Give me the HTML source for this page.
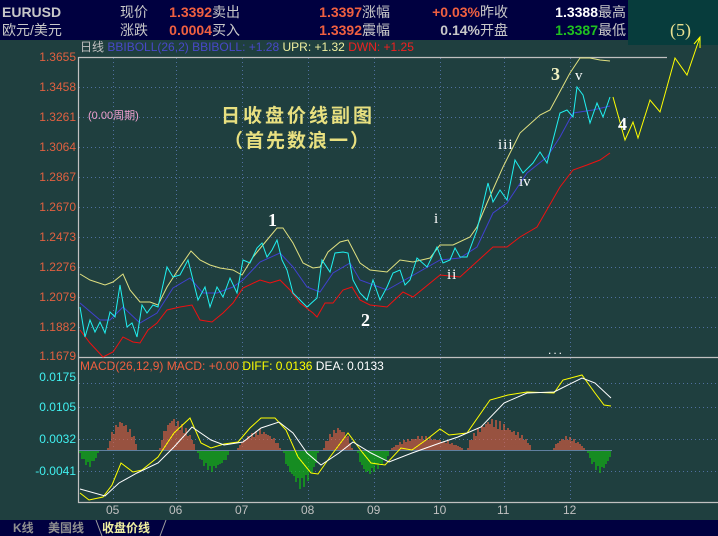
<!DOCTYPE html>
<html><head><meta charset="utf-8"><style>
body{margin:0;width:718px;height:536px;overflow:hidden;background:#1f3f3f;font-family:"Liberation Sans","Noto Sans CJK SC",sans-serif;position:relative}
.a{position:absolute;white-space:nowrap}
#hdr{position:absolute;left:0;top:0;width:718px;height:40px;background:#000040}
.h{position:absolute;font-size:14px;color:#c8c8c8;line-height:18px}
.v{font-weight:bold;color:#f06040}
#tabs{position:absolute;left:0;top:520px;width:718px;height:16px;background:#000040}
.yl{position:absolute;right:642px;font-size:12px;color:#e06040;transform:translateY(-50%)}
.ml{position:absolute;right:642px;font-size:12px;color:#40f0f0;transform:translateY(-50%)}
</style></head><body>
<div id="hdr"></div>
<div style="position:absolute;left:628px;top:0;width:90px;height:45px;background:#073c3c"></div>
<div class="h" style="left:2px;top:3px;font-weight:bold">EURUSD</div>
<div class="h" style="left:2px;top:21px">欧元/美元</div>
<div class="h" style="left:120px;top:3px">现价</div>
<div class="h" style="left:120px;top:21px">涨跌</div>
<div class="h" style="right:478px;top:3px"><span class="v">1.3392</span>卖出</div>
<div class="h" style="right:478px;top:21px"><span class="v">0.0004</span>买入</div>
<div class="h" style="right:328px;top:3px"><span class="v">1.3397</span>涨幅</div>
<div class="h" style="right:328px;top:21px"><span class="v">1.3392</span>震幅</div>
<div class="h" style="right:210px;top:3px"><span class="v">+0.03%</span>昨收</div>
<div class="h" style="right:210px;top:21px"><span class="v" style="color:#c8c8c8">0.14%</span>开盘</div>
<div class="h" style="right:92px;top:3px"><span class="v" style="color:#fff">1.3388</span>最高</div>
<div class="h" style="right:92px;top:21px"><span class="v" style="color:#20c020">1.3387</span>最低</div>

<div class="a" style="left:80px;top:40px;font-size:12px;line-height:14px"><span style="color:#c0c0c0">日线</span> <span style="color:#4848c8">BBIBOLL(26,2) BBIBOLL: +1.28</span> <span style="color:#f0f0a0">UPR: +1.32</span> <span style="color:#f02020">DWN: +1.25</span></div>

<div class="yl" style="top:57px">1.3655</div><div class="yl" style="top:87px">1.3458</div><div class="yl" style="top:117px">1.3261</div><div class="yl" style="top:147px">1.3064</div><div class="yl" style="top:177px">1.2867</div><div class="yl" style="top:207px">1.2670</div><div class="yl" style="top:237px">1.2473</div><div class="yl" style="top:267px">1.2276</div><div class="yl" style="top:297px">1.2079</div><div class="yl" style="top:327px">1.1882</div><div class="yl" style="top:356px">1.1679</div>
<div class="ml" style="top:377px">0.0175</div><div class="ml" style="top:407px">0.0105</div><div class="ml" style="top:439px">0.0032</div><div class="ml" style="top:471px">-0.0041</div>

<svg width="718" height="536" style="position:absolute;left:0;top:0">
<g stroke="#5070a0" stroke-dasharray="1 3" stroke-width="1">
<path d="M79 87.5H718M79 117.5H718M79 147.5H718M79 177.5H718M79 207.5H718M79 237.5H718M79 267.5H718M79 297.5H718M79 327.5H718M79 383.5H718M79 407.5H718M79 439.5H718M79 471.5H718"/>
<path d="M113.5 58V502M176.5 58V502M242.5 58V502M308.5 58V502M374.5 58V502M440.5 58V502M504.5 58V502M570.5 58V502"/>
</g>
<g stroke="#c0c0c0" fill="none" stroke-width="1.2">
<path d="M78.5 57.5H667M78.5 57V502.5H718M78.5 357.5H718"/>
</g>
<line x1="79" y1="450.5" x2="612" y2="450.5" stroke="#6080a0"/>
<path id="hr" stroke="#e86040" stroke-width="1.2" fill="none" d=""/>
<path id="hg" stroke="#10c010" stroke-width="1.2" fill="none" d=""/>
<g fill="none" stroke-width="1">
<polyline stroke="#e0e080" points="80,274 90,280 105,285 113,282 123,274 130,290 140,302 150,302 158,305 167,287 180,267 191,251 200,260 210,265 220,268 233,270 242,275 253,257 267,240 277,228 283,228 293,243 303,263 313,268 320,267 328,252 340,242 348,240 360,263 370,270 387,272 400,260 413,262 430,258 440,245 453,245 470,237 477,227 487,203 503,167 520,133 540,115 550,110 570,73 580,58 590,58 600,60 610,61"/>
<polyline stroke="#4040d0" points="80,303 100,320 110,320 123,307 140,323 157,313 173,288 190,278 203,293 217,293 233,287 243,280 260,262 280,253 293,267 307,287 320,292 333,273 350,263 360,280 387,290 410,277 440,260 460,258 477,247 493,213 507,203 527,173 547,157 560,137 573,113 593,110 610,106"/>
<polyline stroke="#f01010" points="80,330 90,343 103,357 113,352 123,337 133,342 140,343 148,330 157,323 167,310 180,307 192,305 200,320 212,322 223,313 233,303 243,288 260,280 270,283 280,280 290,290 300,303 313,313 317,317 325,303 333,303 343,290 352,287 360,300 370,305 387,307 403,292 413,297 440,275 460,277 493,247 507,247 520,237 537,227 560,187 573,170 587,165 600,160 610,153"/>
<polyline stroke="#20f0f0" points="80,307 85,337 90,320 95,332 100,322 105,333 110,312 115,317 120,285 127,327 132,323 137,337 142,305 147,313 153,305 158,307 167,267 173,277 180,275 188,260 193,280 198,300 205,287 210,307 217,287 223,297 230,278 237,293 243,260 250,263 257,248 262,243 267,257 272,250 277,240 282,260 287,270 293,293 300,300 307,307 317,298 322,260 330,272 335,253 343,252 348,253 353,280 360,293 367,300 373,280 380,300 387,287 393,273 400,270 405,285 410,280 417,258 427,267 437,247 443,263 450,260 455,248 460,257 467,257 477,230 488,183 493,202 500,190 507,200 515,160 523,173 533,163 540,152 547,163 553,140 560,113 567,110 573,117 577,87 583,95 590,123 597,103 603,117 610,97"/>
<polyline stroke="#ffff00" points="613,97 625,140 633,122 638,138 650,100 660,112 675,58 687,75 700,37"/>
<path stroke="#ffff00" d="M694 44L700 37L700 46M700 37V48"/>
<polyline stroke="#ffff00" points="80,493 89,500 103,497 112,485 121,463 133,472 142,470 158,457 174,433 190,418 201,443 211,448 224,444 238,442 250,428 261,418 275,418 286,430 298,457 311,473 318,474 330,457 348,433 362,452 371,463 385,465 401,448 412,450 426,440 440,429 449,435 467,433 490,400 508,395 527,392 554,393 563,380 582,375 595,393 604,405 611,406"/>
<polyline stroke="#ffffff" points="80,489 105,496 119,483 137,473 158,463 174,447 192,427 211,440 224,445 243,442 261,428 279,422 293,433 307,453 321,465 339,453 353,442 371,453 389,462 412,453 440,443 458,437 481,427 504,403 527,393 554,392 582,378 595,383 611,398"/>
</g>
</svg>

<div class="a" style="left:88px;top:107px;font-size:11px;color:#f0a0d0">(0.00周期)</div>
<div class="a" style="left:221px;top:101px;font-size:19px;font-weight:bold;color:#e8e080;letter-spacing:3px">日收盘价线副图</div>
<div class="a" style="left:224px;top:126px;font-size:19px;font-weight:bold;color:#e8e080;letter-spacing:2px">（首先数浪一）</div>
<div class="a" style="font-family:'Liberation Serif',serif;font-weight:bold;font-size:18px;color:#fff;left:268px;top:210px">1</div>
<div class="a" style="font-family:'Liberation Serif',serif;font-weight:bold;font-size:18px;color:#fff;left:361px;top:310px">2</div>
<div class="a" style="font-family:'Liberation Serif',serif;font-weight:bold;font-size:18px;color:#f0f0c0;left:551px;top:64px">3</div>
<div class="a" style="font-family:'Liberation Serif',serif;font-weight:bold;font-size:18px;color:#fff;left:618px;top:114px">4</div>
<div class="a" style="font-family:'Liberation Serif',serif;font-size:18px;color:#e8e090;left:670px;top:20px">(5)</div>
<div class="a" style="font-family:'Liberation Serif',serif;font-size:15px;color:#fff;left:434px;top:211px">i</div>
<div class="a" style="font-family:'Liberation Serif',serif;font-size:15px;color:#fff;left:447px;top:267px;letter-spacing:1px">ii</div>
<div class="a" style="font-family:'Liberation Serif',serif;font-size:15px;color:#fff;left:498px;top:137px;letter-spacing:1px">iii</div>
<div class="a" style="font-family:'Liberation Serif',serif;font-size:15px;color:#fff;left:519px;top:174px">iv</div>
<div class="a" style="font-family:'Liberation Serif',serif;font-size:15px;color:#fff;left:575px;top:68px">v</div>
<div class="a" style="font-size:12px;color:#fff;left:548px;top:343px;letter-spacing:2px">...</div>

<div class="a" style="left:80px;top:359px;font-size:12px;line-height:14px"><span style="color:#f06040">MACD(26,12,9) MACD: +0.00</span> <span style="color:#ffff00">DIFF: 0.0136</span> <span style="color:#fff">DEA: 0.0133</span></div>

<div class="a" style="left:106px;top:503px;font-size:12px;color:#c0c0c0">05</div>
<div class="a" style="left:169px;top:503px;font-size:12px;color:#c0c0c0">06</div>
<div class="a" style="left:235px;top:503px;font-size:12px;color:#c0c0c0">07</div>
<div class="a" style="left:301px;top:503px;font-size:12px;color:#c0c0c0">08</div>
<div class="a" style="left:367px;top:503px;font-size:12px;color:#c0c0c0">09</div>
<div class="a" style="left:433px;top:503px;font-size:12px;color:#c0c0c0">10</div>
<div class="a" style="left:497px;top:503px;font-size:12px;color:#c0c0c0">11</div>
<div class="a" style="left:563px;top:503px;font-size:12px;color:#c0c0c0">12</div>

<div id="tabs"></div>
<div class="a" style="left:13px;top:520px;font-size:12px;font-weight:bold;color:#909090;line-height:16px">K线</div>
<div class="a" style="left:48px;top:520px;font-size:12px;font-weight:bold;color:#909090;line-height:16px">美国线</div>
<div class="a" style="left:102px;top:520px;font-size:12px;font-weight:bold;color:#f0f0a0;line-height:16px">收盘价线</div>
<svg width="718" height="536" style="position:absolute;left:0;top:0"><path d="M96 520L102 536M166 520L160 536" stroke="#a0a0a0" fill="none"/></svg>
<script>
var segs=[[108,137,121,33,1],[160,195,172,35,1],[238,280,261,22,1],[324,352,339,25,1],[392,462,420,15,1],[468,531,490,33,1],[554,584,566,15,1],[80,98,89,17,-1],[198,229,211,22,-1],[284,318,301,40,-1],[358,389,367,26,-1],[588,611,600,23,-1]];
var r='',gr='';
segs.forEach(function(a){for(var x=a[0];x<=a[1];x+=2){var t=x<a[2]?(x-a[0])/(a[2]-a[0]):(a[1]-x)/(a[1]-a[2]);t=Math.max(0,Math.min(1,t));var h=Math.round(Math.max(2,a[3]*Math.sqrt(t)*(0.85+0.15*Math.sin(x*1.7))));
if(a[4]>0)r+='M'+x+' 450V'+(450-h);else gr+='M'+x+' 451V'+(451+h);}});
document.getElementById('hr').setAttribute('d',r);
document.getElementById('hg').setAttribute('d',gr);
</script>
</body></html>
